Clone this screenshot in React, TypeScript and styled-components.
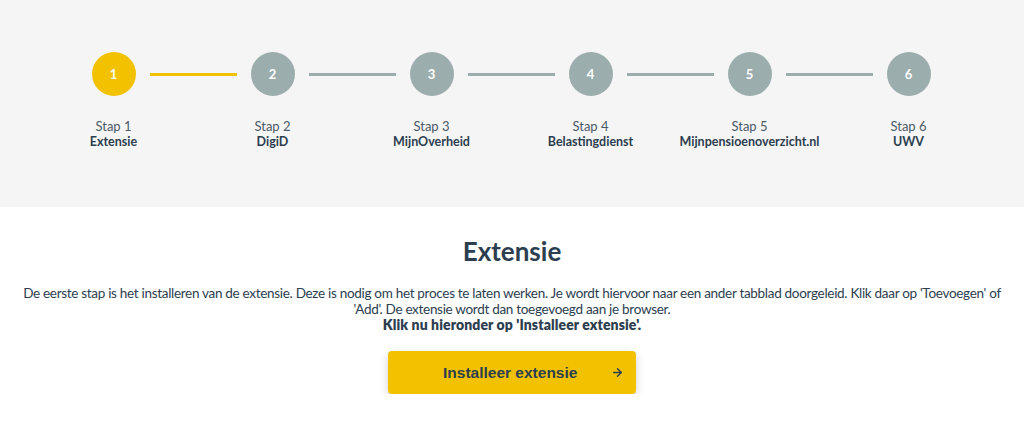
import { Fragment } from 'react'
import styled, { createGlobalStyle } from 'styled-components'
import { ArrowRight } from 'lucide-react'

const GlobalStyle = createGlobalStyle`
  body {
    margin: 0;
    background: #ffffff;
    font-family: Lato, 'Noto Sans', sans-serif;
    color: #2c3e50;
  }
`

const steps = [
  { label: 'Stap 1', name: 'Extensie' },
  { label: 'Stap 2', name: 'DigiD' },
  { label: 'Stap 3', name: 'MijnOverheid' },
  { label: 'Stap 4', name: 'Belastingdienst' },
  { label: 'Stap 5', name: 'Mijnpensioenoverzicht.nl' },
  { label: 'Stap 6', name: 'UWV' },
]

const ACTIVE = 0

const StepperBar = styled.section`
  background: #f5f5f5;
  height: 207px;
  padding: 52px 2px 0 0;
  box-sizing: border-box;
  display: flex;
  justify-content: center;
  align-items: flex-start;
`

const Step = styled.div`
  width: 44px;
  display: flex;
  flex-direction: column;
  align-items: center;
`

const Circle = styled.div<{ $active?: boolean }>`
  width: 44px;
  height: 44px;
  border-radius: 50%;
  background: ${({ $active }) => ($active ? '#f2c200' : '#9badac')};
  color: #fff;
  font-weight: 700;
  font-size: 13px;
  display: flex;
  align-items: center;
  justify-content: center;
`

const StepLabel = styled.div`
  margin-top: 22px;
  font-size: 13px;
  line-height: 16px;
  color: #4b5a68;
  white-space: nowrap;
  text-align: center;
`

const StepName = styled.div`
  font-size: 12.5px;
  line-height: 16px;
  font-weight: 700;
  color: #2c3e50;
  white-space: nowrap;
  text-align: center;
`

const Connector = styled.div<{ $active?: boolean }>`
  width: 87px;
  height: 3px;
  margin: 21px 14px 0;
  background: ${({ $active }) => ($active ? '#f2c200' : '#9badac')};
`

const Content = styled.section`
  display: flex;
  flex-direction: column;
  align-items: center;
  padding: 28px 16px 0;
`

const Title = styled.h2`
  margin: 0;
  font-size: 26px;
  line-height: 32px;
  font-weight: 700;
  color: #2c3e50;
`

const Paragraph = styled.p`
  margin: 18px 0 0;
  max-width: 992px;
  text-align: center;
  font-size: 13.5px;
  letter-spacing: -0.3px;
  line-height: 16px;
  color: #2c3e50;
`

const Strong = styled.strong`
  font-weight: 800;
  font-size: 14px;
  letter-spacing: 0.1px;
`

const InstallButton = styled.button`
  margin-top: 18px;
  width: 248px;
  height: 43px;
  border: none;
  border-radius: 4px;
  background: #f2c200;
  box-shadow: 0 3px 10px rgba(0, 0, 0, 0.18);
  display: flex;
  align-items: center;
  justify-content: space-between;
  padding: 0 12px 0 55px;
  font-family: 'Liberation Sans', Arial, sans-serif;
  font-weight: 700;
  font-size: 15.5px;
  color: #2c3e50;
  cursor: pointer;
`

export default function App() {
  return (
    <>
      <GlobalStyle />
      <StepperBar>
        {steps.map((s, i) => (
          <Fragment key={s.label}>
            <Step>
              <Circle $active={i === ACTIVE}>{i + 1}</Circle>
              <StepLabel>{s.label}</StepLabel>
              <StepName>{s.name}</StepName>
            </Step>
            {i < steps.length - 1 && <Connector $active={i === ACTIVE} />}
          </Fragment>
        ))}
      </StepperBar>
      <Content>
        <Title>Extensie</Title>
        <Paragraph>
          De eerste stap is het installeren van de extensie. Deze is nodig om het proces te laten werken. Je wordt
          hiervoor naar een ander tabblad doorgeleid. Klik daar op 'Toevoegen' of 'Add'. De extensie wordt dan
          toegevoegd aan je browser.
          <br />
          <Strong>Klik nu hieronder op 'Installeer extensie'.</Strong>
        </Paragraph>
        <InstallButton>
          <span>Installeer extensie</span>
          <ArrowRight size={13} strokeWidth={2.6} />
        </InstallButton>
      </Content>
    </>
  )
}
